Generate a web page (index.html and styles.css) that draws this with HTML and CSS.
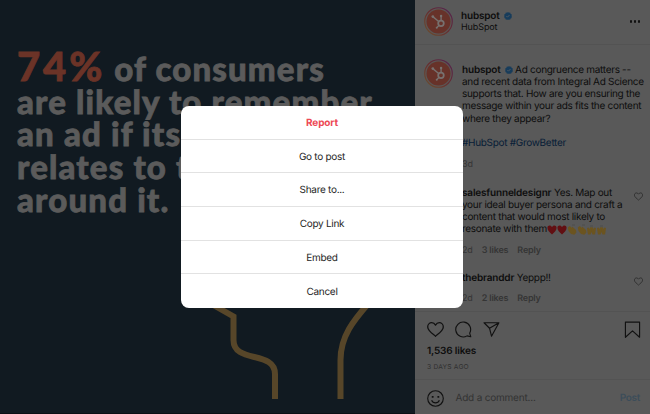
FILE: index.html
```html
<!DOCTYPE html>
<html lang="en">
<head>
<meta charset="utf-8">
<title>HubSpot post</title>
<link rel="stylesheet" href="styles.css">
</head>
<body>
<svg width="0" height="0" class="defs">
  <defs>
    <linearGradient id="ring" x1="0" y1="1" x2="1" y2="0"><stop offset="0" stop-color="#6b502c"/><stop offset=".5" stop-color="#672d30"/><stop offset="1" stop-color="#512052"/></linearGradient>
    <symbol id="avatar" viewBox="0 0 28 28">
      <circle cx="14" cy="14" r="13.3" fill="#5b5655" stroke="url(#ring)" stroke-width="1.1"/>
      <circle cx="14" cy="14" r="11.6" fill="#673229"/>
      <g fill="none" stroke="#77716f" stroke-width="1.3"><circle cx="16.4" cy="15.8" r="2.7" stroke-width="1.7"/><path d="M14.2 14 8.5 9.3M16.5 13V9.5M14.5 17.7l-2 2"/></g>
      <g fill="#77716f"><circle cx="8.5" cy="9.2" r="1.3"/><circle cx="16.5" cy="8.8" r="1.2"/><circle cx="12.3" cy="20" r="1"/></g>
    </symbol>
    <symbol id="badge" viewBox="0 0 20 20">
      <path fill="#173c5b" d="m10 0 2.3 2.1 3-.7 1 3 3 1-.7 3L20 10l-1.4 2.3.7 3-3 1-1 3-3-.7L10 20l-2.3-1.4-3 .7-1-3-3-1 .7-3L0 10l1.4-1.6-.7-3 3-1 1-3 3 .7z"/>
      <path d="m6 10.2 2.7 2.7 5.2-5.5" fill="none" stroke="#5c6063" stroke-width="2"/>
    </symbol>
    <symbol id="heart" viewBox="0 0 24 24"><path fill="none" stroke="currentColor" stroke-width="1.8" stroke-linejoin="round" d="M12 21.5C9 18.7 1 13.5 1 8.3 1 4.8 3.6 2.4 6.7 2.4c2.6 0 4.2 1.5 5.3 3.4 1.1-1.9 2.7-3.4 5.3-3.4C20.4 2.4 23 4.8 23 8.3c0 5.2-8 10.4-11 13.2z"/></symbol>
  </defs>
</svg>
<main class="post">
  <section class="media">
    <h1 class="headline"><span class="stat">74%</span> of consumers<br>are likely to remember<br>an ad if its<br>relates to the<br>around it.</h1>
    <svg class="art" viewBox="0 0 415 414"><g fill="none" stroke="#574629" stroke-width="6"><path d="M208 302 233.500 316.500V340C233.500 364 275 350 275 374V399"/><path d="M368 304C354 320 340.500 336 340.500 360V399"/></g></svg>
  </section>
  <aside class="panel">
    <header class="account">
      <svg class="avatar"><use href="#avatar"/></svg>
      <div class="names"><div><b>hubspot</b><svg class="badge"><use href="#badge"/></svg></div><div class="sub">HubSpot</div></div>
      <span class="more"><i></i><i></i><i></i></span>
    </header>
    <div class="thread">
      <article class="caption">
        <svg class="avatar"><use href="#avatar"/></svg>
        <div class="copy">
          <p><b>hubspot</b><svg class="badge"><use href="#badge"/></svg> Ad congruence matters --<br>and recent data from Integral Ad Science<br>supports that. How are you ensuring the<br>message within your ads fits the content<br>where they appear?</p>
          <p class="tags">#HubSpot #GrowBetter</p>
          <div class="meta">3d</div>
        </div>
      </article>
      <article class="comment first">
        <div class="copy">
          <p><b>salesfunneldesignr</b> Yes. Map out<br>your ideal buyer persona and craft a<br>content that would most likely to<br>resonate with them<svg class="emoji" viewBox="0 0 60 12">
            <defs><path id="h" d="M5 10.500C3 8.500.4 6.500.4 3.700.4 1.200 3.700.4 5 3 6.300.4 9.600 1.200 9.600 3.700 9.600 6.500 7 8.500 5 10.500z"/><path id="c" d="m.8 3.500 2-1.500L5 4l.2-1.500L9 6l.4 2.500-2 2.200L4 10 1.500 7z"/><path id="r" d="M.5 4 2 3.500 3 5 4 3l1 .5V8L4 10.500H1.500L1 8zM9.500 4 8 3.500 7 5 6 3l-1 .5V8l1 2.500h2.500L9 8z"/></defs>
            <g fill="#620f12"><use href="#h"/><use href="#h" x="10"/></g><g fill="#6b5420"><use href="#c" x="20"/><use href="#c" x="30"/><use href="#r" x="39.500"/><use href="#r" x="49.500"/></g><path d="M25 1h3m7 0h3m5 1h3m7 0h3" stroke="#484746" stroke-width=".7"/></svg></p>
          <div class="meta"><span>2d</span><b>3 likes</b><b>Reply</b></div>
        </div>
        <svg class="like"><use href="#heart"/></svg>
      </article>
      <article class="comment second">
        <div class="copy"><p><b>thebranddr</b> Yeppp!!</p><div class="meta"><span>2d</span><b>2 likes</b><b>Reply</b></div></div>
        <svg class="like"><use href="#heart"/></svg>
      </article>
    </div>
    <div class="actions">
      <div class="icons">
        <svg class="icon"><use href="#heart"/></svg>
        <svg class="icon" viewBox="0 0 24 24"><path d="M20.700 17.200A10.500 10.500 0 1 0 17 21l5.300 1.300z"/></svg>
        <svg class="icon" viewBox="0 0 24 24"><path d="M1.500 2.500h21L12 21.500 9.200 10.200zM22.500 2.500 9.200 10.200"/></svg>
        <svg class="icon save" viewBox="0 0 24 24"><path d="M2 1.500h20V23l-10-9-10 9z"/></svg>
      </div>
      <b class="likes">1,536 likes</b>
      <time>3 DAYS AGO</time>
    </div>
    <footer class="composer">
      <svg class="icon" viewBox="0 0 24 24"><circle cx="12" cy="12" r="11"/><path d="M6.500 14.500c2 5 9 5 11 0"/><path class="eyes" d="M8 8.500v2.500M16 8.500v2.500"/></svg>
      <span class="prompt">Add a comment...</span><span class="send">Post</span>
    </footer>
  </aside>
</main>
<div class="dialog" role="dialog">
  <button class="danger">Report</button><button>Go to post</button><button>Share to...</button><button>Copy Link</button><button>Embed</button><button>Cancel</button>
</div>
</body>
</html>
```
FILE: styles.css
```css
* { box-sizing: border-box; }
body { margin: 0; width: 650px; height: 414px; overflow: hidden; font: 10px/12.3px Inter, "Liberation Sans", sans-serif; letter-spacing: -.3px; text-rendering: geometricPrecision; color: #0d0d0d; }
p, h1 { margin: 0; }
.defs { position: absolute; }
b { font-weight: 600; letter-spacing: -.18px; }
.post { display: flex; height: 414px; }
.media { position: relative; flex: 0 0 415px; background: #111a21; border-bottom: 1px solid #0a0f14; overflow: hidden; }
.headline { padding: 50px 0 0 17px; font: 900 33px/32.7px Lato, sans-serif; letter-spacing: 1.150px; color: #5b5b5b; -webkit-text-stroke: .8px currentColor; white-space: nowrap; }
.stat { font-size: 40px; line-height: 32px; letter-spacing: 2.900px; color: #6b3327; }
.art { position: absolute; inset: 0; width: 415px; height: 414px; }
.panel { flex: 1; min-width: 0; display: flex; flex-direction: column; background: #595959; white-space: nowrap; }
.account { height: 45px; flex: none; display: flex; padding: 7px 10px 0 9px; border-bottom: 1px solid #535353; }
.avatar { width: 29px; height: 29px; flex: none; }
.names { margin: 3px 0 0 8px; flex: 1; }
.badge { width: 8px; height: 8px; margin-left: 4px; vertical-align: -1px; }
.sub { font-size: 9px; line-height: 12px; letter-spacing: -.1px; }
.more { display: flex; gap: 1.500px; padding-top: 13px; }
.more i { width: 2.500px; height: 2.500px; border-radius: 50%; background: #111; }
.thread { height: 267px; flex: none; border-bottom: 1px solid #535353; }
.caption { display: flex; padding: 14px 0 0 9px; }
.caption .copy { margin-left: 9px; padding-top: 4.500px; }
.tags { margin-top: 12.300px; color: #071c36; }
.meta { display: flex; gap: 9px; font-size: 9px; line-height: 12px; letter-spacing: -.15px; color: #353535; margin-top: 9px; }
.comment { display: flex; justify-content: space-between; padding: 0 7px 0 47px; }
.first { margin-top: 16px; }
.second { margin-top: 15px; }
.like { width: 9px; height: 9px; margin-top: 5px; color: #222; }
.emoji { width: 60px; height: 12px; vertical-align: -2px; margin: -2px 0; }
.actions { height: 67px; flex: none; padding: 9px 9px 0 12px; }
.icons { display: flex; gap: 11px; }
.icon { width: 17px; height: 17px; fill: none; stroke: #111; stroke-width: 1.600; stroke-linejoin: round; color: #111; }
.save { margin-left: auto; }
.likes { display: block; margin-top: 7px; }
time { display: block; font-size: 6.700px; line-height: 10px; letter-spacing: .2px; margin-top: 4.500px; color: #303030; }
.composer { flex: 1; display: flex; align-items: center; padding: 2px 10px 0 12px; border-top: 1px solid #535353; }
.eyes { stroke-width: 2.500; }
.prompt { margin-left: 11.500px; letter-spacing: -.2px; color: #333; }
.send { margin-left: auto; color: #3c4d59; font-weight: 600; }
.dialog { position: absolute; left: 181px; top: 106px; width: 282px; height: 202px; border-radius: 8px; overflow: hidden; background: #fff; display: grid; grid-template-rows: repeat(6, 1fr); }
.dialog button { border: 0; border-bottom: 1px solid #e2e2e2; background: none; padding: 1.500px 0 0; font: 10px/12px Inter, sans-serif; letter-spacing: -.28px; text-rendering: geometricPrecision; color: #262626; }
.dialog button:last-child { border: 0; }
.dialog .danger { color: #ed4956; font-weight: 700; letter-spacing: -.15px; }
```
